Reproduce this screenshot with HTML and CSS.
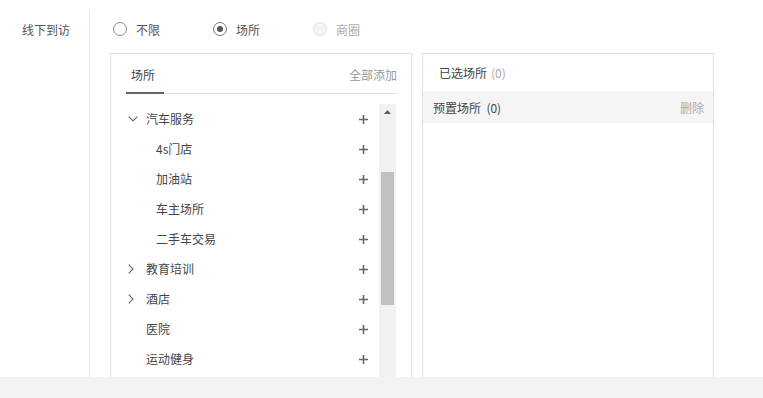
FILE: index.html
```html
<!DOCTYPE html>
<html lang="zh-CN">
<head>
<meta charset="utf-8">
<title>线下到访</title>
<link rel="stylesheet" href="styles.css">
</head>
<body>
<div class="page">
  <div class="form-row">
    <div class="label-col"><span class="label">线下到访</span></div>
    <div class="content-col">
      <div class="radios">
        <label class="radio"><span class="circle"></span><span class="rtext">不限</span></label>
        <label class="radio checked"><span class="circle"><span class="dot"></span></span><span class="rtext">场所</span></label>
        <label class="radio disabled"><span class="circle"></span><span class="rtext">商圈</span></label>
      </div>
      <div class="panels">
        <div class="panel left">
          <div class="tabs">
            <span class="tab">场所</span>
            <span class="add-all">全部添加</span>
          </div>
          <div class="list-wrap">
            <ul class="tree">
              <li class="row"><span class="chev"><svg width="10" height="6" viewBox="0 0 10 6"><polyline points="0.7,0.7 5,5 9.3,0.7" fill="none" stroke="#666" stroke-width="1.1"/></svg></span><span class="name">汽车服务</span><span class="plus"><svg width="9" height="9" viewBox="0 0 9 9"><path d="M4.5 0V9M0 4.5H9" stroke="#666" stroke-width="1.6"/></svg></span></li>
              <li class="row child"><span class="name">4s门店</span><span class="plus"><svg width="9" height="9" viewBox="0 0 9 9"><path d="M4.5 0V9M0 4.5H9" stroke="#666" stroke-width="1.6"/></svg></span></li>
              <li class="row child"><span class="name">加油站</span><span class="plus"><svg width="9" height="9" viewBox="0 0 9 9"><path d="M4.5 0V9M0 4.5H9" stroke="#666" stroke-width="1.6"/></svg></span></li>
              <li class="row child"><span class="name">车主场所</span><span class="plus"><svg width="9" height="9" viewBox="0 0 9 9"><path d="M4.5 0V9M0 4.5H9" stroke="#666" stroke-width="1.6"/></svg></span></li>
              <li class="row child"><span class="name">二手车交易</span><span class="plus"><svg width="9" height="9" viewBox="0 0 9 9"><path d="M4.5 0V9M0 4.5H9" stroke="#666" stroke-width="1.6"/></svg></span></li>
              <li class="row"><span class="chev"><svg width="6" height="10" viewBox="0 0 6 10"><polyline points="0.7,0.7 5,5 0.7,9.3" fill="none" stroke="#666" stroke-width="1.1"/></svg></span><span class="name">教育培训</span><span class="plus"><svg width="9" height="9" viewBox="0 0 9 9"><path d="M4.5 0V9M0 4.5H9" stroke="#666" stroke-width="1.6"/></svg></span></li>
              <li class="row"><span class="chev"><svg width="6" height="10" viewBox="0 0 6 10"><polyline points="0.7,0.7 5,5 0.7,9.3" fill="none" stroke="#666" stroke-width="1.1"/></svg></span><span class="name">酒店</span><span class="plus"><svg width="9" height="9" viewBox="0 0 9 9"><path d="M4.5 0V9M0 4.5H9" stroke="#666" stroke-width="1.6"/></svg></span></li>
              <li class="row"><span class="chev"></span><span class="name">医院</span><span class="plus"><svg width="9" height="9" viewBox="0 0 9 9"><path d="M4.5 0V9M0 4.5H9" stroke="#666" stroke-width="1.6"/></svg></span></li>
              <li class="row"><span class="chev"></span><span class="name">运动健身</span><span class="plus"><svg width="9" height="9" viewBox="0 0 9 9"><path d="M4.5 0V9M0 4.5H9" stroke="#666" stroke-width="1.6"/></svg></span></li>
            </ul>
            <div class="scrollbar">
              <div class="arrow"><svg width="7" height="4" viewBox="0 0 7 4"><polygon points="3.5,0 7,4 0,4" fill="#606060"/></svg></div>
              <div class="thumb"></div>
            </div>
          </div>
        </div>
        <div class="panel right">
          <div class="sel-head">已选场所 <span class="count">(0)</span></div>
          <div class="sel-row"><span class="sel-name">预置场所&nbsp;&nbsp;(0)</span><span class="del">删除</span></div>
        </div>
      </div>
    </div>
  </div>
</div>
<div class="footer"></div>
</body>
</html>
```

FILE: styles.css
```css
* { box-sizing: border-box; }
html, body { margin: 0; padding: 0; }
body {
  background: #fff;
  font-family: "Noto Sans CJK SC", "Liberation Sans", sans-serif;
  font-size: 12px;
  color: #444;
  width: 763px;
  height: 398px;
  overflow: hidden;
}
.page {
  height: 377px;
  overflow: hidden;
  padding-top: 11px;
}
.form-row {
  display: flex;
  height: 420px;
}
.label-col {
  width: 90px;
  border-right: 1px solid #e8e8e8;
  padding-left: 22px;
  padding-top: 9px;
}
.label {
  color: #555;
  line-height: 20px;
}
.content-col {
  padding-left: 20px;
  flex: 1;
}
.radios {
  display: flex;
  height: 36px;
  align-items: center;
  padding-left: 3px;
  margin-bottom: 6px;
}
.radio {
  display: flex;
  align-items: center;
  width: 100px;
  color: #555;
}
.rtext { padding-top: 1px; }
.circle {
  width: 14px;
  height: 14px;
  border: 1px solid #8a8a8a;
  border-radius: 50%;
  display: flex;
  align-items: center;
  justify-content: center;
  margin-right: 9px;
}
.radio.checked .circle { border-color: #777; }
.dot {
  width: 6px;
  height: 6px;
  border-radius: 50%;
  background: #555;
}
.radio.disabled .circle {
  border-color: #e2e2e2;
  background: #f4f4f4;
}
.radio.disabled .rtext { color: #aaa; }
.panels {
  display: flex;
  gap: 10px;
}
.panel {
  border: 1px solid #e0e0e0;
  height: 360px;
}
.panel.left { width: 302px; }
.panel.right { width: 292px; }
.tabs {
  display: flex;
  justify-content: space-between;
  align-items: flex-end;
  margin: 0 14px 0 15px;
  height: 40px;
  border-bottom: 1px solid #e0e0e0;
}
.tab {
  width: 38px;
  padding-left: 5px;
  line-height: 20px;
  padding-bottom: 7px;
  border-bottom: 2px solid #666;
  margin-bottom: -1px;
  color: #444;
}
.add-all {
  color: #999;
  line-height: 20px;
  padding-bottom: 8px;
}
.list-wrap {
  display: flex;
  margin-top: 10px;
  padding-right: 15px;
}
.tree {
  list-style: none;
  margin: 0;
  padding: 0;
  flex: 1;
}
.row {
  display: flex;
  align-items: center;
  height: 30px;
  padding-left: 16px;
  padding-right: 11px;
}
.row.child { padding-left: 45px; }
.chev {
  width: 19px;
  height: 10px;
  display: flex;
  align-items: center;
  padding-left: 1px;
}
.chev svg { display: block; }
.name {
  flex: 1;
  color: #444;
  padding-bottom: 2px;
}
.plus {
  width: 9px;
  height: 9px;
  display: flex;
}
.plus svg { display: block; }
.scrollbar {
  width: 17px;
  background: #f1f1f1;
  padding: 0 2px;
  height: 300px;
}
.arrow {
  height: 17px;
  display: flex;
  justify-content: center;
  align-items: center;
  padding-bottom: 1px;
}
.arrow svg { display: block; }
.thumb {
  margin-top: 51px;
  height: 133px;
  background: #c1c1c1;
}
.sel-head {
  height: 37px;
  padding-left: 16px;
  display: flex;
  align-items: center;
  color: #444;
}
.count {
  color: #aaa;
  margin-left: 4px;
}
.sel-row {
  height: 32px;
  background: #f5f5f5;
  display: flex;
  align-items: center;
  justify-content: space-between;
  padding: 0 9px 0 10px;
}
.sel-name { color: #444; }
.del { color: #aaa; }
.footer {
  height: 21px;
  background: #f3f3f6;
}
```
